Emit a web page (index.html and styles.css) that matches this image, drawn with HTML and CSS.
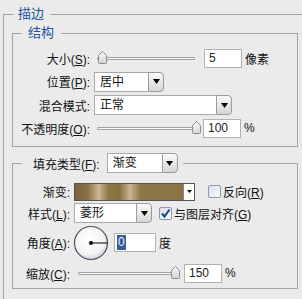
FILE: index.html
```html
<!DOCTYPE html>
<html lang="zh-CN">
<head>
    <meta charset="UTF-8">
    <title>描边</title>
    <meta name="viewport" content="width=device-width, initial-scale=1">
    <link rel="stylesheet" href="styles.css">
</head>
<body>
    <fieldset class="group outer">
        <legend class="title outer-title">描边</legend>

        <!-- 结构 -->
        <fieldset class="group box">
            <legend class="title box-title">结构</legend>
            <div class="rows rows-struct">
                <div class="row">
                    <span class="lbl">大小(<u>S</u>):</span>
                    <div class="slider">
                        <div class="track"></div>
                        <svg class="thumb" style="left:1px" width="9" height="13" viewBox="0 0 9 13"><path d="M0.5 4.5 L4.5 0.5 L8.5 4.5 L8.5 11.5 Q8.5 12.5 7.5 12.5 L1.5 12.5 Q0.5 12.5 0.5 11.5 Z" fill="url(#thumbfill)" stroke="#8c8c8c"/></svg>
                    </div>
                    <div class="field">5</div>
                    <span class="unit">像素</span>
                </div>
                <div class="row">
                    <span class="lbl">位置(<u>P</u>):</span>
                    <div class="combo combo-pos">
                        <span class="combo-text">居中</span>
                        <span class="combo-btn"><svg width="7" height="5" viewBox="0 0 7 5"><polygon points="0,0 7,0 3.5,5" fill="#000"/></svg></span>
                    </div>
                </div>
                <div class="row">
                    <span class="lbl">混合模式:</span>
                    <div class="combo combo-mode">
                        <span class="combo-text">正常</span>
                        <span class="combo-btn"><svg width="7" height="5" viewBox="0 0 7 5"><polygon points="0,0 7,0 3.5,5" fill="#000"/></svg></span>
                    </div>
                </div>
                <div class="row">
                    <span class="lbl">不透明度(<u>O</u>):</span>
                    <div class="slider">
                        <div class="track"></div>
                        <svg class="thumb" style="left:95px" width="9" height="13" viewBox="0 0 9 13"><path d="M0.5 4.5 L4.5 0.5 L8.5 4.5 L8.5 11.5 Q8.5 12.5 7.5 12.5 L1.5 12.5 Q0.5 12.5 0.5 11.5 Z" fill="url(#thumbfill)" stroke="#8c8c8c"/></svg>
                    </div>
                    <div class="field field-op">100</div>
                    <span class="unit">%</span>
                </div>
            </div>
        </fieldset>

        <!-- 填充 -->
        <fieldset class="group box fill">
            <legend class="fill-legend">
                <div class="legend-row">
                    <span>填充类型(<u>F</u>):</span>
                    <div class="combo combo-fill">
                        <span class="combo-text">渐变</span>
                        <span class="combo-btn"><svg width="7" height="5" viewBox="0 0 7 5"><polygon points="0,0 7,0 3.5,5" fill="#000"/></svg></span>
                    </div>
                </div>
            </legend>
            <div class="rows rows-fill">
                <div class="row">
                    <span class="lbl">渐变:</span>
                    <div class="gradient">
                        <span class="swatch"></span>
                        <span class="grad-btn"><svg width="5" height="3" viewBox="0 0 5 3"><polygon points="0,0 5,0 2.5,3" fill="#000"/></svg></span>
                    </div>
                    <span class="check check-rev"></span>
                    <span class="check-text">反向(<u>R</u>)</span>
                </div>
                <div class="row">
                    <span class="lbl">样式(<u>L</u>):</span>
                    <div class="combo combo-style">
                        <span class="combo-text">菱形</span>
                        <span class="combo-btn"><svg width="7" height="5" viewBox="0 0 7 5"><polygon points="0,0 7,0 3.5,5" fill="#000"/></svg></span>
                    </div>
                    <span class="check check-align"><svg width="11" height="11" viewBox="0 0 11 11"><path d="M2 5.5 L4.5 8.5 L9.5 1.5" fill="none" stroke="#1f3f8f" stroke-width="2"/></svg></span>
                    <span class="check-text">与图层对齐(<u>G</u>)</span>
                </div>
                <div class="row">
                    <span class="lbl">角度(<u>A</u>):</span>
                    <svg class="dial" width="36" height="36" viewBox="0 0 36 36">
                        <defs>
                            <radialGradient id="dialfill" cx="0.45" cy="0.4" r="0.6">
                                <stop offset="0" stop-color="#ffffff"/>
                                <stop offset="0.75" stop-color="#f4f4f6"/>
                                <stop offset="1" stop-color="#d2d4da"/>
                            </radialGradient>
                        </defs>
                        <circle cx="18" cy="18" r="16.5" fill="url(#dialfill)" stroke="#4b505c" stroke-width="1.2"/>
                        <line x1="18" y1="18" x2="34.5" y2="18" stroke="#000" stroke-width="1"/>
                        <circle cx="18" cy="18" r="2" fill="#000"/>
                    </svg>
                    <div class="field field-angle"><span class="sel">0</span></div>
                    <span class="unit">度</span>
                </div>
                <div class="row">
                    <span class="lbl">缩放(<u>C</u>):</span>
                    <div class="slider slider-scale">
                        <div class="track"></div>
                        <svg class="thumb" style="left:93px" width="9" height="13" viewBox="0 0 9 13"><path d="M0.5 4.5 L4.5 0.5 L8.5 4.5 L8.5 11.5 Q8.5 12.5 7.5 12.5 L1.5 12.5 Q0.5 12.5 0.5 11.5 Z" fill="url(#thumbfill)" stroke="#8c8c8c"/></svg>
                    </div>
                    <div class="field field-scale">150</div>
                    <span class="unit">%</span>
                </div>
            </div>
        </fieldset>
    </fieldset>

    <svg width="0" height="0" class="defs">
        <defs>
            <linearGradient id="thumbfill" x1="0" y1="0" x2="0" y2="1">
                <stop offset="0" stop-color="#fbfbfb"/>
                <stop offset="1" stop-color="#d4d4d4"/>
            </linearGradient>
        </defs>
    </svg>
</body>
</html>
```

FILE: styles.css
```css
body { margin: 0; height: 299px; overflow: hidden; background: #ebebeb; color: #111; font: 12px "Liberation Sans", "Noto Sans CJK SC", sans-serif; }
u { text-decoration: underline; }
.defs { position: absolute; top: 0; left: 0; }

.group { margin: 0; padding: 0; min-width: 0; border: 1px solid #a4a4a4; }
.outer { margin: 6px 0 0 3px; padding-bottom: 10px; border-right: 0; border-bottom: 0; }
.title { color: #2352a3; font-size: 13px; line-height: 16px; }
.outer-title { margin-left: 10px; padding: 0 6px 0 4px; }
.box { margin: 3px 4px 0 8px; }
.box-title { margin-left: 9px; padding: 0 7px 0 6px; }
.fill { margin-top: 6px; }
.fill-legend { margin-left: 9px; padding: 0 5px 0 11px; }
.legend-row { display: flex; align-items: center; gap: 7px; height: 20px; }

.rows { display: grid; }
.rows-struct { grid-template-rows: 24px 23px 24px 22px; padding: 5px 0 7px; }
.rows-fill { grid-template-rows: 19px 24px 35px 26px; padding: 9px 0 2px; }
.row { display: flex; align-items: center; white-space: nowrap; }
.lbl { width: 77px; text-align: right; }
.rows-fill .lbl { width: 57px; }

.combo { display: flex; height: 20px; margin-left: 4px; }
.combo-text { flex: 1; background: #fff; border: 1px solid #a9a9a9; border-right: 0; padding-left: 5px; line-height: 18px; }
.combo-btn { width: 16px; box-sizing: border-box; display: flex; align-items: center; justify-content: center; border: 1px solid #9a9a9a; border-radius: 0 4px 4px 0; background: linear-gradient(#fafafa, #d6d6d6); }
.combo-pos { width: 70px; }
.combo-mode { width: 138px; }
.combo-fill { width: 71px; margin-left: 0; }
.combo-style { width: 78px; }

.slider { position: relative; display: flex; align-items: center; width: 104px; height: 14px; margin-left: 7px; }
.track { width: 98px; height: 3px; box-sizing: border-box; border: 1px solid #a2a2a2; border-radius: 1px; background: #f6f6f6; }
.thumb { position: absolute; top: 0; }
.slider-scale { width: 103px; margin-left: 8px; }
.slider-scale .track { width: 97px; }

.field { width: 38px; height: 19px; box-sizing: border-box; margin-left: 3px; padding-left: 4px; background: #fff; border: 1px solid #b2b2b2; line-height: 17px; color: #222; }
.field-op { margin-left: 2px; }
.field-scale { margin-left: 3px; }
.field-angle { width: 42px; margin-left: 5px; padding-left: 2px; }
.sel { display: inline-block; padding: 0 1px; line-height: 15px; background: #3b5c9c; color: #e6edf8; }
.unit { margin-left: 3px; }

.gradient { display: flex; height: 18px; margin-left: 4px; box-sizing: border-box; border: 1px solid #555; }
.swatch { width: 108px; background: linear-gradient(90deg, #7b6536 0%, #8a7446 12%, #cbb894 22%, #8c7648 31%, #86703f 41%, #c9b590 51%, #8d7747 61%, #8a7344 100%); }
.grad-btn { width: 10px; display: flex; align-items: center; justify-content: center; background: #fff; border-left: 1px solid #888; }

.check { width: 13px; height: 13px; box-sizing: border-box; display: flex; align-items: center; justify-content: center; border: 1px solid #8597b2; border-radius: 2px; background: linear-gradient(135deg, #d9e0ea, #fbfcfd); }
.check-rev { margin-left: 13px; }
.check-align { margin-left: 7px; }
.check-text { margin-left: 2px; }

.dial { margin-left: 3px; }
```
